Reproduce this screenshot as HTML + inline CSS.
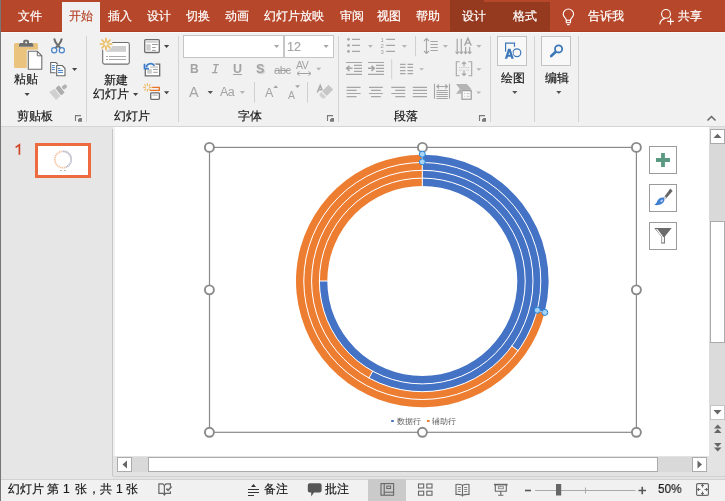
<!DOCTYPE html>
<html><head><meta charset="utf-8">
<style>
*{margin:0;padding:0;box-sizing:border-box;}
html,body{width:725px;height:501px;overflow:hidden;background:#f1f1f1;font-family:"Liberation Sans",sans-serif;}
.a{position:absolute;}
.t{position:absolute;font-size:12px;line-height:14px;white-space:nowrap;}
#tabs{left:0;top:0;width:725px;height:32px;background:#b7472a;border-bottom:1px solid #ad3f23;}
.tab{position:absolute;top:9px;font-size:12px;line-height:14px;color:#fff;white-space:nowrap;}
.sep{position:absolute;width:1px;background:#d4d4d4;}
.lbl{position:absolute;top:109px;font-size:12px;line-height:14px;color:#1a1a1a;white-space:nowrap;}
svg{position:absolute;overflow:visible;}
div{will-change:transform;}
.t,.lbl,.tab{-webkit-text-stroke:0.2px currentColor;}
</style></head><body>
<!-- tab bar -->
<div class="a" id="tabs"></div>
<div class="a" style="left:450px;top:0;width:34px;height:32px;background:#95391f"></div>
<div class="a" style="left:484px;top:2px;width:66px;height:30px;background:#95391f"></div>
<div class="a" style="left:62px;top:2px;width:38px;height:31px;background:#f1f1f1"></div>
<div class="a" style="left:0;top:32px;width:725px;height:1px;background:#fafafa"></div>
<div class="a" style="left:62px;top:32px;width:38px;height:1px;background:#f1f1f1"></div>
<div class="tab" style="left:18px">文件</div>
<div class="tab" style="left:69px;color:#b7472a">开始</div>
<div class="tab" style="left:108px">插入</div>
<div class="tab" style="left:147px">设计</div>
<div class="tab" style="left:186px">切换</div>
<div class="tab" style="left:225px">动画</div>
<div class="tab" style="left:264px">幻灯片放映</div>
<div class="tab" style="left:340px">审阅</div>
<div class="tab" style="left:377px">视图</div>
<div class="tab" style="left:416px">帮助</div>
<div class="tab" style="left:462px">设计</div>
<div class="tab" style="left:513px">格式</div>
<div class="tab" style="left:588px">告诉我</div>
<div class="tab" style="left:678px">共享</div>
<!-- ribbon -->
<div class="a" style="left:0;top:126px;width:725px;height:1px;background:#d5d5d5"></div>
<div class="sep" style="left:86px;top:36px;height:86px"></div>
<div class="sep" style="left:178px;top:36px;height:86px"></div>
<div class="sep" style="left:338px;top:36px;height:86px"></div>
<div class="sep" style="left:490px;top:36px;height:86px"></div>
<div class="sep" style="left:534px;top:36px;height:86px"></div>
<div class="sep" style="left:578px;top:36px;height:86px"></div>
<div class="lbl" style="left:17px">剪贴板</div>
<div class="lbl" style="left:114px">幻灯片</div>
<div class="lbl" style="left:238px">字体</div>
<div class="lbl" style="left:394px">段落</div>
<!-- main area -->
<div class="a" style="left:0;top:127px;width:113px;height:352px;background:#e6e6e6"></div>
<div class="a" style="left:112px;top:129px;width:1px;height:347px;background:#c6c6c6"></div>
<div class="a" style="left:115px;top:127px;width:594px;height:329px;background:#fff"></div>
<svg id="icons" width="725" height="501" style="left:0;top:0" viewBox="0 0 725 501">
<!-- paste -->
<path d="M15.5 43h3.5v4h14v-4h3.5a1.5 1.5 0 0 1 1.5 1.5v22a1.5 1.5 0 0 1-1.5 1.5h-21a1.5 1.5 0 0 1-1.5-1.5v-22a1.5 1.5 0 0 1 1.5-1.5z" fill="#eac47e"/>
<path d="M23.2 43v-1.6a1.6 1.6 0 0 1 1.6-1.6h2.6a1.6 1.6 0 0 1 1.6 1.6v1.6h2.8a1.5 1.5 0 0 1 1.5 1.5v2.3h-14.3v-2.3a1.5 1.5 0 0 1 1.5-1.5z" fill="#6d6d6d"/>
<circle cx="26.1" cy="42.6" r="1" fill="#f1f1f1"/>
<path d="M28.3 51.3h9l4.5 4.5v13.5h-13.5z" fill="#fff" stroke="#f1f1f1" stroke-width="3"/>
<path d="M28.3 51.3h9l4.5 4.5v13.5h-13.5z" fill="#fff" stroke="#6d6d6d" stroke-width="1.1"/>
<path d="M37.3 51.3v4.5h4.5" fill="none" stroke="#6d6d6d" stroke-width="1"/>
<!-- scissors -->
<path d="M54.2 38.5Q55.5 44 60.8 48.2M61.8 38.5Q60.5 44 55.2 48.2" fill="none" stroke="#6d6d6d" stroke-width="2"/>
<circle cx="54.2" cy="50.2" r="2.6" fill="none" stroke="#4a86c8" stroke-width="1.2"/>
<circle cx="61.8" cy="50.2" r="2.6" fill="none" stroke="#4a86c8" stroke-width="1.2"/>
<!-- copy -->
<path d="M50.7 62.5h5.2l1.6 1.6v8.6h-6.8z" fill="#fff" stroke="#666" stroke-width="1.1"/>
<path d="M52 65.6h2.8M52 67.6h2.8M52 69.6h2.8" stroke="#3f7fc4" stroke-width="1"/>
<path d="M56.7 65.5h5.5l2.8 2.8v7.4h-8.3z" fill="#fff" stroke="#f1f1f1" stroke-width="2.2"/>
<path d="M56.7 65.5h5.5l2.8 2.8v7.4h-8.3z" fill="#fff" stroke="#666" stroke-width="1.1"/>
<path d="M58 68.4h2.2M58 70.4h5M58 72.4h5" stroke="#3f7fc4" stroke-width="1"/>
<path d="M72 68h5.2l-2.6 3z" fill="#444"/>
<!-- format painter (disabled) -->
<g transform="translate(60 90.4) rotate(-38)">
<rect x="3.3" y="-1.9" width="4.8" height="3.8" rx="1" fill="#b3b3b3"/>
<rect x="-2.2" y="-4.6" width="4.6" height="9.2" rx="0.8" fill="#adadad"/>
<path d="M-3.2 -4.6L-9.5 -5.5L-9 5.2L-3.2 4.6z" fill="#d0d0d0"/>
</g>
<path d="M24.5 93h5.2l-2.6 3z" fill="#444"/>
<!-- new slide -->
<rect x="102.7" y="42.5" width="26.6" height="21.6" rx="1.8" fill="#fff" stroke="#6f6f6f" stroke-width="1.1"/>
<rect x="106" y="46" width="20" height="5.8" fill="#cfcfcf"/>
<path d="M106 56.5h2M109 56.5h17M106 59.5h2M109 59.5h17" stroke="#ababab" stroke-width="1"/>
<circle cx="106" cy="44" r="6.6" fill="#f1f1f1"/>
<g stroke="#ebbd60" stroke-width="1.7" stroke-linecap="round">
<path d="M106 38.3v3.4M106 46.3v3.4M100.3 44h3.4M108.3 44h3.4M102 40l2.3 2.3M107.7 45.7l2.3 2.3M110 40l-2.3 2.3M104.3 45.7l-2.3 2.3"/>
</g>
<path d="M133 93h5.2l-2.6 3z" fill="#444"/>
<!-- layout -->
<rect x="144.7" y="39.7" width="14.6" height="12.8" rx="1" fill="#fff" stroke="#6d6d6d" stroke-width="1.3"/>
<rect x="146.3" y="41.2" width="11.5" height="1.6" fill="#cccccc"/>
<rect x="146.3" y="44.2" width="4.4" height="6.4" fill="#cccccc"/>
<path d="M152.1 44.5h5.7M152.1 47.5h3.7M152.1 50.4h3.7" stroke="#9a9a9a" stroke-width="1"/>
<path d="M164 45h5.2l-2.6 3z" fill="#444"/>
<!-- reset -->
<path d="M145.3 69V75.8h14.4V64.1h-6" fill="#fff" stroke="#6d6d6d" stroke-width="1.3"/>
<rect x="150.3" y="66.3" width="7.5" height="1.6" fill="#cccccc"/>
<rect x="147.2" y="69.2" width="4.6" height="4.4" fill="#cccccc"/>
<path d="M153.2 69.5h4.6M153.2 72.3h4.6" stroke="#9a9a9a" stroke-width="1"/>
<path d="M154.5 65.9A4.3 3.8 0 0 0 146.3 67.3" fill="none" stroke="#f1f1f1" stroke-width="3.4"/>
<path d="M154.5 65.9A4.3 3.8 0 0 0 146.3 67.3" fill="none" stroke="#3d7cc9" stroke-width="1.7"/>
<path d="M144.5 63.8V68.6H149" fill="none" stroke="#3d7cc9" stroke-width="1.7"/>
<!-- section -->
<g stroke="#efb863" stroke-width="1.1" stroke-linecap="round">
<path d="M147.4 83.6v1.7M147.4 89.5v1.7M143.6 87.4h1.7M149.5 87.4h1.7M144.7 84.7l1.1 1.1M149 89l1.1 1.1M150.1 84.7l-1.1 1.1M145.8 89l-1.1 1.1"/>
</g>
<path d="M152.2 87.4H159.3V90.4H150" fill="none" stroke="#e97424" stroke-width="1.3"/>
<rect x="150.7" y="92.9" width="8.7" height="6.4" rx="0.8" fill="#fff" stroke="#6d6d6d" stroke-width="1.3"/>
<rect x="152.4" y="94.4" width="5.3" height="1.7" fill="#c8c8c8"/>
<path d="M164 91.2h5.2l-2.6 3z" fill="#444"/>
</svg>
<div class="t" style="left:14px;top:72px;color:#1a1a1a">粘贴</div>
<div class="t" style="left:104px;top:73px;color:#1a1a1a">新建</div>
<div class="t" style="left:93px;top:87px;color:#1a1a1a">幻灯片</div>
<div class="t" style="left:501px;top:71px;color:#1a1a1a">绘图</div>
<div class="t" style="left:545px;top:71px;color:#1a1a1a">编辑</div>
<!-- font boxes -->
<div class="a" style="left:183px;top:35px;width:101px;height:23px;background:#fff;border:1px solid #c6c6c6"></div>
<div class="a" style="left:284px;top:35px;width:50px;height:23px;background:#fff;border:1px solid #c6c6c6"></div>
<div class="t" style="left:287px;top:40px;color:#a6a6a6;font-size:12.5px">12</div>
<div class="a" style="left:497px;top:36px;width:30px;height:30px;background:#f8f8f8;border:1px solid #c3c3c3"></div>
<div class="a" style="left:541px;top:36px;width:30px;height:30px;background:#f8f8f8;border:1px solid #c3c3c3"></div>
<div class="a" style="left:190px;top:62px;font:bold 12px/14px 'Liberation Sans',sans-serif;color:#a3a3a3">B</div>

<div class="a" style="left:233px;top:62px;font:bold 12.5px/14px 'Liberation Sans',sans-serif;color:#a3a3a3">U</div>
<div class="a" style="left:256px;top:62px;font:bold 12.5px/14px 'Liberation Sans',sans-serif;color:#a3a3a3;text-shadow:1px 1px 1px #c8c8c8">S</div>
<div class="a" style="left:274px;top:63px;font:11.5px/14px 'Liberation Sans',sans-serif;color:#a3a3a3;letter-spacing:-0.6px">abc</div>
<div class="a" style="left:296px;top:59px;font:10.5px/12px 'Liberation Sans',sans-serif;color:#a3a3a3;letter-spacing:-0.5px">AV</div>
<div class="a" style="left:189px;top:84px;font:14.5px/16px 'Liberation Sans',sans-serif;color:#a3a3a3">A</div>
<div class="a" style="left:220px;top:85px;font:12.5px/14px 'Liberation Sans',sans-serif;color:#a3a3a3;letter-spacing:-0.5px">Aa</div>
<div class="a" style="left:265px;top:86px;font:12.5px/14px 'Liberation Sans',sans-serif;color:#a3a3a3">A</div>
<div class="a" style="left:288px;top:89px;font:10.5px/12px 'Liberation Sans',sans-serif;color:#a3a3a3">A</div>

<svg width="725" height="501" style="left:0;top:0" viewBox="0 0 725 501">
<!-- launchers -->
<g fill="none" stroke="#7a7a7a" stroke-width="1.1">
<path d="M75.5 121V115.6H81"/>
<path d="M327.5 121V115.6H333"/>
<path d="M479.5 121V115.6H485"/>
</g>
<g fill="#7a7a7a">
<path d="M79.6 118H82V121.8H78V119.6Z"/>
<path d="M331.6 118H334V121.8H330V119.6Z"/>
<path d="M483.6 118H486V121.8H482V119.6Z"/>
</g>
<path d="M707.5 120.5l4-4l4 4" fill="none" stroke="#666" stroke-width="1.5"/>
<!-- font dropdown arrows -->
<path d="M274 45h5.2l-2.6 3z M323.5 45h5.2l-2.6 3z" fill="#a6a6a6"/>
<path d="M233 74.5h9" stroke="#a3a3a3" stroke-width="1"/>
<path d="M213.3 64.6h5.5M211.9 72.6h5.5M216.4 64.6l-1.7 8" fill="none" stroke="#a3a3a3" stroke-width="1.4"/>
<path d="M274.5 70.5h16" stroke="#a0a0a0" stroke-width="1"/>
<path d="M297 73.5h14M299.5 71.5l-2.5 2l2.5 2M308.5 71.5l2.5 2l-2.5 2" fill="none" stroke="#a3a3a3" stroke-width="1"/>
<path d="M316.2 67.7h5l-2.5 2.8z" fill="#b5b5b5"/>
<path d="M207.6 91.1h5.4l-2.7 2.9z" fill="#555"/>
<path d="M239.8 91.1h5.2l-2.6 2.9z" fill="#b5b5b5"/>
<path d="M254.5 82v20.5M307.5 82v20.5" stroke="#d0d0d0" stroke-width="1"/>
<path d="M273.4 87.9h4.6l-2.3-2.7z" fill="#a3a3a3"/>
<path d="M295.1 85.2h4.9l-2.45 2.8z" fill="#a3a3a3"/>
<path d="M317.3 92.5L320.2 85.5L322.8 91.5M318.4 89.8H321.8" fill="none" stroke="#a8a8a8" stroke-width="1.5"/>
<g transform="translate(324.6 93.4) rotate(-45)"><rect x="-1.3" y="-4" width="11" height="8" fill="#f1f1f1"/><rect x="-0.2" y="-3.3" width="9" height="6.6" rx="0.6" fill="#c6c6c6"/><path d="M-1.4 -3.3H-3.4A1.8 3.3 0 0 0 -3.4 3.3H-1.4z" fill="#d0d0d0"/></g>
<!-- paragraph -->
<g fill="#a6a6a6"><circle cx="348.5" cy="39.3" r="1.4"/><circle cx="348.5" cy="45.4" r="1.4"/><circle cx="348.5" cy="51.4" r="1.4"/></g>
<path d="M352 39.3h8M352 45.4h8M352 51.4h8M386.2 39.3h8.8M386.2 45.4h8.8M386.2 51.4h8.8" stroke="#a6a6a6" stroke-width="1.2"/>
<path d="M368 45.1h4.8l-2.4 2.6zM401.8 45.1h5.2l-2.6 2.6zM442.8 45.1h5.2l-2.6 2.6zM476.3 45.1h5.2l-2.6 2.6zM419.2 68.2h4.8l-2.4 2.4zM476.3 68.2h5.2l-2.6 2.6zM476.2 91.4h4.9l-2.45 2.7z" fill="#b5b5b5"/>
<g fill="#a0a0a0" font-family="Liberation Sans" font-size="6px"><text x="380.6" y="41.6">1</text><text x="380.6" y="47.7">2</text><text x="380.6" y="53.7">3</text></g>
<path d="M346 62.5h16M354 65.4h8M354 68.3h8M354 71.4h8M346 74.4h16M368 62.5h16M376 65.4h8M376 68.3h8M376 71.4h8M368 74.4h16" stroke="#a6a6a6" stroke-width="1.2"/>
<path d="M346.5 68.3h6M349.5 65.8l-2.8 2.5l2.8 2.5M368 68.3h6M371.5 65.8l2.8 2.5l-2.8 2.5" fill="none" stroke="#a6a6a6" stroke-width="1.6"/>
<path d="M415.5 36v20.3M391.7 59.3v20" stroke="#d0d0d0" stroke-width="1"/>
<path d="M400 64.4h5.5M407.5 64.4h5.6M400 67.4h5.5M407.5 67.4h5.6M400 70.6h5.5M407.5 70.6h5.6M400 73.6h5.5M407.5 73.6h5.6" stroke="#a6a6a6" stroke-width="1.2"/>
<path d="M426.5 38.5v15M424 41l2.5-2.5l2.5 2.5M424 51l2.5 2.5l2.5-2.5M430.4 41.5h7.4M430.4 44.5h7.4M430.4 47.5h7.4M430.4 50.5h7.4" fill="none" stroke="#a6a6a6" stroke-width="1.1"/>
<path d="M457.2 38.8v14.4M461.3 38.8v14.4M465.6 47v6.2M469.7 47v6.2" stroke="#a6a6a6" stroke-width="1.2"/>
<path d="M455.5 51.6l1.7 2l1.7-2M459.6 51.6l1.7 2l1.7-2M463.9 51.6l1.7 2l1.7-2M468 51.6l1.7 2l1.7-2" fill="none" stroke="#a6a6a6" stroke-width="1.1"/>
<path d="M464.6 45.6l3.3-7.3l3.3 7.3M465.8 43.1h4.2" fill="none" stroke="#a6a6a6" stroke-width="1.4"/>
<path d="M459.5 61.8h-3.2v14h3.2M468.5 61.8h3.2v14h-3.2M464 62v4.5M462 64l2-2l2 2M464 71v4.5M462 73.5l2 2l2-2" fill="none" stroke="#a6a6a6" stroke-width="1.1"/>
<path d="M459 67.5h10M459 70.2h10" stroke="#c0c0c0" stroke-width="0.9" stroke-dasharray="1.2 1"/>
<path d="M346.6 87.3h14M346.6 90.3h10M346.6 93.5h14M346.6 96.6h10M369 87.3h13.8M371 90.3h9.8M369 93.5h13.8M371 96.6h9.8M391.3 87.3h13.9M395.3 90.3h9.9M391.3 93.5h13.9M395.3 96.6h9.9M412.8 87.3h14.2M412.8 90.3h14.2M412.8 93.5h14.2M412.8 96.6h14.2" stroke="#a6a6a6" stroke-width="1.2"/>
<path d="M434.5 83.7v15M449.5 83.7v15M436.5 86.5h11.3M439 84.5l-2.2 2l2.2 2M445.3 84.5l2.2 2l-2.2 2M436.5 90.5h11.3M436.5 92.5h11.3M436.5 94.5h11.3M436.5 96.5h11.3M436.5 98.5h11.3" fill="none" stroke="#a6a6a6" stroke-width="1.1"/>
<path d="M456 84.1H466.8L471.3 88.9L466.8 93.7H456L459.8 88.9Z" fill="#b4b4b4"/>
<rect x="461.3" y="89.9" width="10.4" height="9.9" fill="#f1f1f1"/>
<rect x="462" y="90.6" width="9.2" height="8.6" fill="#fafafa" stroke="#a0a0a0" stroke-width="1.3"/>
<path d="M464 93.5h1M466.5 93.5h3M464 96.3h1M466.5 96.3h3" stroke="#c0c0c0" stroke-width="0.9"/>
<!-- separators right -->
<path d="M534.5 36v86M578.5 36v86M490.5 36v86" stroke="#d4d4d4" stroke-width="1"/>
<!-- drawing icon -->
<path d="M505.6 51.8V43.2h8.9v3.6" fill="none" stroke="#3c77b9" stroke-width="1.2"/>
<circle cx="516.9" cy="52.8" r="3.9" fill="none" stroke="#3c77b9" stroke-width="1.2"/>
<path d="M504.8 58.8L508.1 48.8H510.5L513.8 58.8H511.3L510.7 56.8H507.9L507.3 58.8ZM508.5 54.8H510.1L509.3 51.9Z" fill="#3c77b9" fill-rule="evenodd" stroke="#f8f8f8" stroke-width="1.4" paint-order="stroke"/>
<path d="M512.2 91h5.2l-2.6 3zM556.2 91h5.2l-2.6 3z" fill="#555"/>
<!-- edit icon -->
<circle cx="558.6" cy="48.9" r="3.6" fill="none" stroke="#3c77b9" stroke-width="1.8"/>
<path d="M555.8 51.8l-4.6 4.2" stroke="#3c77b9" stroke-width="2.6" stroke-linecap="round"/>
</svg>
<!-- thumbnail -->

<div class="a" style="left:35px;top:143px;width:56px;height:35px;border:3px solid #ee6a3f;background:#fff"></div>
<svg width="725" height="501" style="left:0;top:0" viewBox="0 0 725 501">
<circle cx="63" cy="159.5" r="8.2" fill="none" stroke="#f5c4a2" stroke-width="1.8" stroke-dasharray="1.2 0.6"/>
<path d="M63 151.3A8.2 8.2 0 0 1 70.9 161.6A8.2 8.2 0 0 1 66 167.1" fill="none" stroke="#b3c6ea" stroke-width="1.8" stroke-dasharray="1.2 0.6"/>
<path d="M60 170.5h1.5M64 170.5h1.5" stroke="#999" stroke-width="0.8"/>
<path d="M15.6 147.4L19.4 144.8V154.7" fill="none" stroke="#d24726" stroke-width="1.7"/>
<!-- scrollbars -->
<rect x="709" y="127" width="16" height="352" fill="#e3e3e3"/>
<rect x="113" y="456" width="596" height="23" fill="#e3e3e3"/>
<rect x="709" y="143" width="16" height="78" fill="#d9d9d9"/>
<rect x="709" y="342" width="16" height="63" fill="#dbdbdb"/>
<rect x="132" y="457" width="16" height="15" fill="#d9d9d9"/>
<rect x="657" y="457" width="36" height="15" fill="#d9d9d9"/>
<rect x="710.5" y="129.5" width="14" height="14" fill="#fff" stroke="#ababab"/>
<path d="M713.5 138h8l-4-4.3z" fill="#666"/>
<rect x="710.5" y="221.5" width="14" height="121" fill="#fff" stroke="#ababab"/>
<rect x="710.5" y="405.5" width="14" height="14" fill="#fff" stroke="#c4c4c4"/>
<path d="M713.5 410h8l-4 4.5z" fill="#666"/>
<path d="M714 428.5h7.5l-3.75-4zM714 433h7.5l-3.75-4zM714 443h7.5l-3.75 4zM714 447.5h7.5l-3.75 4z" fill="#666"/>
<rect x="117.5" y="457.5" width="14" height="14" fill="#fff" stroke="#ababab"/>
<path d="M127 460.5v8l-4.5-4z" fill="#666"/>
<rect x="148.5" y="457.5" width="509" height="14" fill="#fff" stroke="#ababab"/>
<rect x="692.5" y="457.5" width="14" height="14" fill="#fff" stroke="#ababab"/>
<path d="M697.5 460.5v8l4.5-4z" fill="#666"/>
<path d="M113 476.5h612" stroke="#c6c6c6" stroke-dasharray="1 0.6"/>
<!-- chart frame -->
<rect x="209.5" y="147.4" width="426.9" height="284.9" fill="none" stroke="#8a8a8a" stroke-width="1.2"/>
<path d="M422.30 154.70A126.3 126.3 0 0 1 544.63 312.41L537.08 310.47A118.5 118.5 0 0 0 422.30 162.50Z" fill="#4472c4"/>
<path d="M544.63 312.41A126.3 126.3 0 1 1 422.30 154.70L422.30 162.50A118.5 118.5 0 1 0 537.08 310.47Z" fill="#ed7d31"/>
<path d="M422.30 162.50A118.5 118.5 0 0 1 518.17 350.65L511.86 346.07A110.7 110.7 0 0 0 422.30 170.30Z" fill="#4472c4"/>
<path d="M518.17 350.65A118.5 118.5 0 1 1 422.30 162.50L422.30 170.30A110.7 110.7 0 1 0 511.86 346.07Z" fill="#ed7d31"/>
<path d="M422.30 170.30A110.7 110.7 0 1 1 368.97 378.01L372.73 371.17A102.9 102.9 0 1 0 422.30 178.10Z" fill="#4472c4"/>
<path d="M368.97 378.01A110.7 110.7 0 0 1 422.30 170.30L422.30 178.10A102.9 102.9 0 0 0 372.73 371.17Z" fill="#ed7d31"/>
<path d="M422.30 178.10A102.9 102.9 0 1 1 319.40 281.00L327.30 281.00A95.0 95.0 0 1 0 422.30 186.00Z" fill="#4472c4"/>
<path d="M319.40 281.00A102.9 102.9 0 0 1 422.30 178.10L422.30 186.00A95.0 95.0 0 0 0 327.30 281.00Z" fill="#ed7d31"/>
<circle cx="422.3" cy="281.0" r="118.5" fill="none" stroke="#fff" stroke-width="1"/>
<circle cx="422.3" cy="281.0" r="110.7" fill="none" stroke="#fff" stroke-width="1"/>
<circle cx="422.3" cy="281.0" r="102.9" fill="none" stroke="#fff" stroke-width="1"/>
<path d="M422.3 154.2V186.5" stroke="#fff" stroke-width="1"/>
<path d="M536.59 310.35L545.12 312.53" stroke="#fff" stroke-width="1"/>
<path d="M511.45 345.77L518.57 350.95" stroke="#fff" stroke-width="1"/>
<path d="M372.97 370.73L368.73 378.45" stroke="#fff" stroke-width="1"/>
<path d="M327.80 281.00L318.90 281.00" stroke="#fff" stroke-width="1"/>
<g fill="#fff" stroke="#8a8a8a" stroke-width="1.9">
<circle cx="209.4" cy="147.4" r="4.5"/><circle cx="422.4" cy="147.4" r="4.5"/><circle cx="636.4" cy="147.4" r="4.5"/>
<circle cx="209.4" cy="289.85" r="4.5"/><circle cx="636.4" cy="289.85" r="4.5"/>
<circle cx="209.4" cy="432.3" r="4.5"/><circle cx="422.4" cy="432.3" r="4.5"/><circle cx="636.4" cy="432.3" r="4.5"/>
</g>
<g fill="#a9d3f5" stroke="#1f86e0" stroke-width="1">
<circle cx="422.3" cy="154.2" r="3"/><circle cx="422.3" cy="161.8" r="3"/>
<circle cx="537.3" cy="310.3" r="3"/><circle cx="544.8" cy="312.4" r="3"/>
</g>
<rect x="391.2" y="420" width="2.6" height="2" fill="#4472c4"/>
<rect x="427" y="420" width="2.6" height="2" fill="#ed7d31"/>
<!-- side buttons -->
<g fill="#fff" stroke="#9b9b9b" stroke-width="1">
<rect x="649.5" y="146.5" width="27" height="27"/>
<rect x="649.5" y="184.5" width="27" height="27"/>
<rect x="649.5" y="222.5" width="27" height="27"/>
</g>
<path d="M663 153v14M656 160h14" stroke="#5a9a82" stroke-width="3.8"/>
<path d="M670.3 188.6L672.6 190.9L666.5 197.9L664.7 196.2Z" fill="#666"/>
<path d="M664.4 196L666.8 198.4L665.6 199.6L663.2 197.2Z" fill="#c9c9c9"/>
<path d="M663.6 197.6C660.2 197.2 657.8 199.4 656.8 202C656.3 203.4 655.3 204.5 654 205.1C657.8 205.7 661.8 204.6 663.5 202.3C664.6 200.8 665 199.2 663.6 197.6Z" fill="#3f7ed0"/>
<ellipse cx="661.6" cy="200.8" rx="1.6" ry="1.1" fill="#a8c8f0" transform="rotate(-40 661.6 200.8)"/>
<path d="M654.3 228H671.7L664.9 236.6V243.6H661.2V236.6Z" fill="#6b6b6b"/>
<path d="M656.6 229.2L662.3 236.5V242.6" fill="none" stroke="#fff" stroke-width="1.2"/>
<path d="M663.5 237v5.5" stroke="#f4f4f4" stroke-width="1.1"/>
</svg>
<div class="a" style="left:396.5px;top:417px;font-size:8px;line-height:10px;color:#595959;white-space:nowrap">数据行</div>
<div class="a" style="left:432px;top:417px;font-size:8px;line-height:10px;color:#595959;white-space:nowrap">辅助行</div>
<!-- status bar -->
<div class="a" style="left:0;top:479px;width:725px;height:1px;background:#d2d2d2"></div>
<div class="a" style="left:368px;top:479px;width:38px;height:22px;background:#cacaca"></div>
<div class="t" style="left:8px;top:482px;color:#1a1a1a">幻灯片</div><div class="t" style="left:47px;top:482px;color:#1a1a1a">第</div><div class="t" style="left:63px;top:482px;color:#1a1a1a">1</div><div class="t" style="left:75px;top:482px;color:#1a1a1a">张</div><div class="t" style="left:88px;top:482px;color:#1a1a1a">，</div><div class="t" style="left:100px;top:482px;color:#1a1a1a">共</div><div class="t" style="left:116px;top:482px;color:#1a1a1a">1</div><div class="t" style="left:126px;top:482px;color:#1a1a1a">张</div>
<div class="t" style="left:264px;top:482px;color:#1a1a1a">备注</div>
<div class="t" style="left:325px;top:482px;color:#1a1a1a">批注</div>
<div class="t" style="left:657.5px;top:481px;font-size:13.6px;line-height:16px;transform:scaleX(0.87);transform-origin:0 0;color:#1a1a1a">50%</div>
<svg width="725" height="501" style="left:0;top:0" viewBox="0 0 725 501">
<!-- tab icons -->
<path d="M566.3 20.2C566 18.2 563.2 16.6 563.2 14.2A5.2 5.2 0 0 1 573.6 14.2C573.6 16.6 570.8 18.2 570.5 20.2" fill="none" stroke="#fff" stroke-width="1.1"/>
<rect x="566.3" y="20.3" width="4.2" height="2.4" fill="none" stroke="#fff" stroke-width="1.1"/>
<path d="M567.1 24.6h2.6" stroke="#fff" stroke-width="1.2"/>
<circle cx="666" cy="13.9" r="4.4" fill="none" stroke="#fff" stroke-width="1.1"/>
<path d="M659.7 24.4C660.2 21.2 662.2 19 665 18.4" fill="none" stroke="#fff" stroke-width="1.1"/>
<path d="M670.6 18.1v6.6M667.3 21.4h6.6" stroke="#fff" stroke-width="1.1"/>
<!-- spell check icon -->
<path d="M170.4 486.4V483.9H166L164.4 485.6L162.8 483.9H158.9V493.3H163.2L164.4 494.9L165.6 493.3H170.4V491.2M164.4 485.6V494.6" fill="none" stroke="#666" stroke-width="1.2"/>
<path d="M166.4 488.6L168.1 490.3L171.6 486.6" fill="none" stroke="#666" stroke-width="1.5"/>
<!-- notes icon -->
<path d="M251 487.1L253.5 484L256 487.1Z" fill="#333"/><path d="M248 489.5h11M248 492.5h11M248 495.5h6" stroke="#333" stroke-width="1.1"/>
<!-- comment icon -->
<path d="M309.8 483.2h9.8a2 2 0 0 1 2 2v5.2a2 2 0 0 1-2 2h-5.6l-2.8 4.2v-4.2h-1.4a2 2 0 0 1-2-2v-5.2a2 2 0 0 1 2-2z" fill="#555"/>
<!-- view icons -->
<rect x="381" y="483.6" width="12.6" height="11.6" fill="none" stroke="#666" stroke-width="1.1"/>
<path d="M384.2 484v11M384.2 492.3h9.4" fill="none" stroke="#666" stroke-width="1.1"/>
<rect x="386.8" y="486.1" width="3.8" height="2.4" fill="none" stroke="#666" stroke-width="1"/>
<g fill="none" stroke="#666" stroke-width="1.1"><rect x="418.5" y="484" width="5.2" height="4"/><rect x="426.8" y="484" width="5.2" height="4"/><rect x="418.5" y="491.2" width="5.2" height="4"/><rect x="426.8" y="491.2" width="5.2" height="4"/></g>
<path d="M456 484.5q3.3-0.6 6.5 0.8q3.3-1.4 6.5-0.8v10q-3.2-0.5-6.5 0.8q-3.3-1.3-6.5-0.8z M462.5 485.3v11.2" fill="none" stroke="#666" stroke-width="1.1"/>
<path d="M457.8 487.5h3M457.8 489.5h3M457.8 491.5h3M464.2 487.5h3M464.2 489.5h3M464.2 491.5h3" stroke="#777" stroke-width="0.9"/>
<path d="M494 484.6h13.6" stroke="#666" stroke-width="1.6"/>
<path d="M495.3 485v6.2h11v-6.2M500.8 491.2v3.6M498.2 495.3h5.2" fill="none" stroke="#666" stroke-width="1.1"/>
<rect x="498.4" y="486.7" width="5" height="2" fill="none" stroke="#888" stroke-width="0.9"/>
<path d="M525 490.5h6" stroke="#555" stroke-width="1.6"/>
<path d="M535 490.5h100.5" stroke="#aaa" stroke-width="1"/>
<path d="M585.5 487.5v6" stroke="#aaa"/>
<rect x="556" y="484" width="5.2" height="11.5" fill="#666"/>
<path d="M638.5 490.5h7.5M642.25 486.75v7.5" stroke="#555" stroke-width="1.6"/>
<rect x="696.6" y="483.6" width="11.8" height="11.8" rx="1.2" fill="#f8f8f8" stroke="#6a6a6a" stroke-width="1.2"/>
<path d="M702.5 483.5V487.5M701 485.5H704M702.5 491.5V495.5M701 493.5H704M696.5 489.5H700.5M698.5 488V491M704.5 489.5H708.5M706.5 488V491" stroke="#6a6a6a" stroke-width="1.1"/>
</svg>
<div class="a" style="left:0;top:0;width:1px;height:501px;background:#767676"></div>
</body></html>
